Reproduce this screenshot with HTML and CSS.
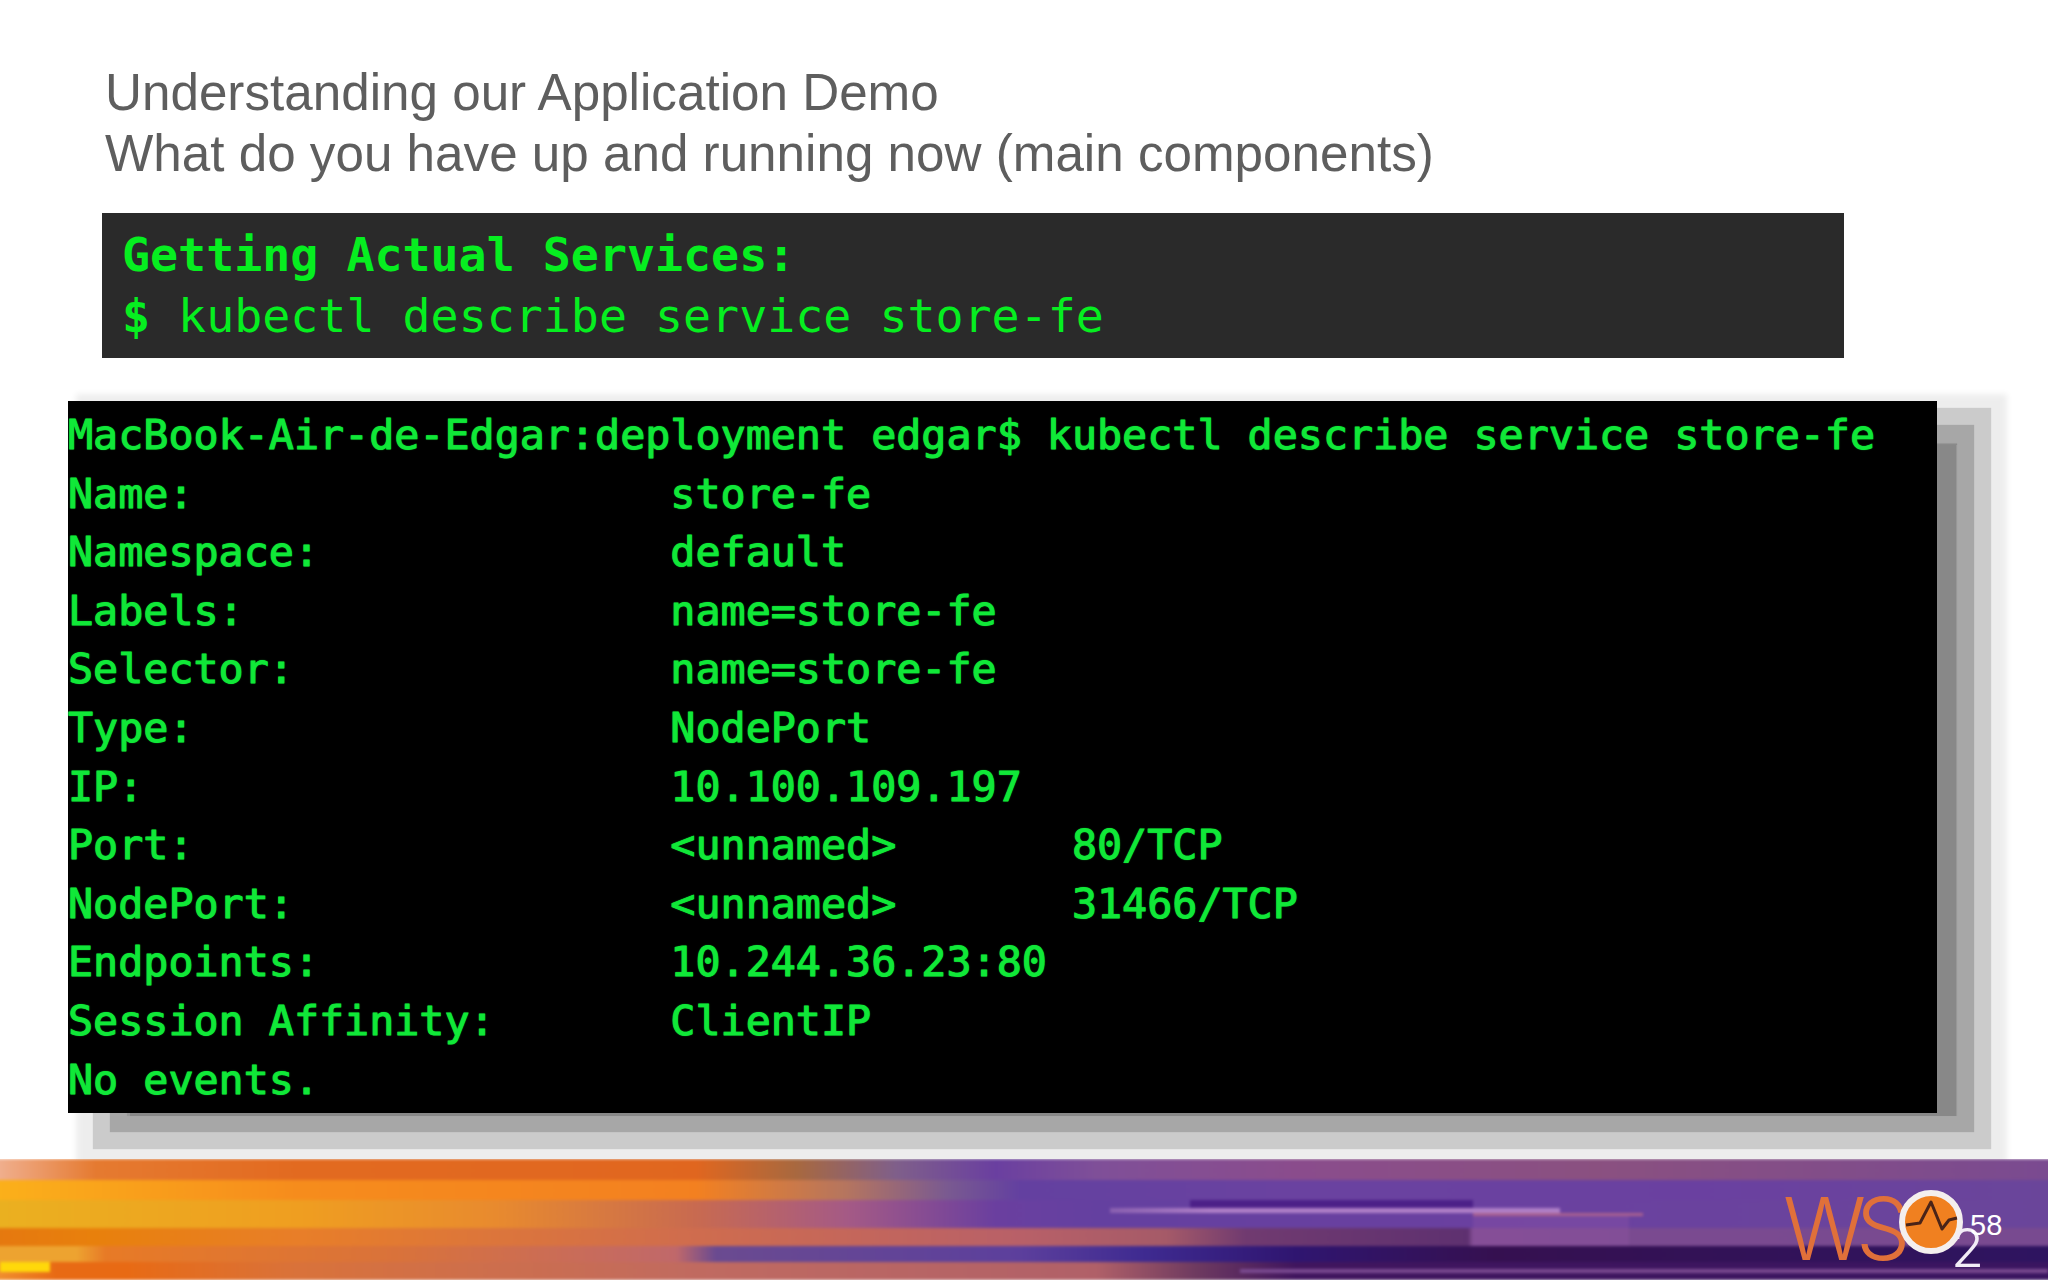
FILE: index.html
```html
<!DOCTYPE html>
<html lang="en">
<head>
    <meta charset="UTF-8">
    <title>Understanding our Application Demo</title>
    <link rel="stylesheet" href="styles.css">
</head>
<body>
    <div class="slide">
        <div class="title">
            <div>Understanding our Application Demo</div>
            <div>What do you have up and running now (main components)</div>
        </div>
        <div class="command">
            <div class="command-head">Getting Actual Services:</div>
            <div><b>$</b> kubectl describe service store-fe</div>
        </div>
        <pre class="terminal">MacBook-Air-de-Edgar:deployment edgar$ kubectl describe service store-fe
Name:                   store-fe
Namespace:              default
Labels:                 name=store-fe
Selector:               name=store-fe
Type:                   NodePort
IP:                     10.100.109.197
Port:                   &lt;unnamed&gt;       80/TCP
NodePort:               &lt;unnamed&gt;       31466/TCP
Endpoints:              10.244.36.23:80
Session Affinity:       ClientIP
No events.</pre>
        <div class="banner">
            <div class="strips">
                <div class="strip s1"></div>
                <div class="strip s2"></div>
                <div class="strip s3"></div>
                <div class="strip s4"></div>
                <div class="strip s5"></div>
                <div class="strip s6"></div>
                <div class="streak streak-yellow"></div>
                <div class="streak streak-dark"></div>
                <div class="streak streak-light"></div>
                <div class="streak streak-pink"></div>
                <div class="streak streak-low"></div>
                <div class="panel"></div>
            </div>
            <span class="logo-ws">WS</span>
            <svg class="logo-dot" width="70" height="70" viewBox="0 0 70 70">
                <circle cx="35" cy="35" r="29" fill="#f08020" stroke="#f4efee" stroke-width="6"/>
                <path d="M10 38 L24 36 L35 15 L46 42 L53 33 L61 31" fill="none" stroke="#4a2418" stroke-width="3" stroke-linejoin="round"/>
            </svg>
            <span class="logo-two">2</span>
            <span class="page-num">58</span>
        </div>
    </div>
</body>
</html>
```
FILE: styles.css
```css
body {
    margin: 0;
    background-color: #ffffff;
}
.slide {
    width: 2048px;
    height: 1280px;
    display: flex;
    flex-direction: column;
    overflow: hidden;
}
.title {
    margin: 62px 0 0 105px;
    font-family: "Liberation Sans", Arial, sans-serif;
    font-size: 51.2px;
    line-height: 61px;
    color: #5e5e5e;
}
.command {
    margin: 29px 0 0 102px;
    width: 1722px;
    height: 133px;
    padding: 12px 0 0 20px;
    background-color: #2a2a2a;
    font-family: "DejaVu Sans Mono", monospace;
    font-size: 46.6px;
    line-height: 61px;
    color: #06ee20;
}
.command-head, .command b {
    font-weight: bold;
}
.terminal {
    margin: 43px 0 0 68px;
    width: 1869px;
    height: 702px;
    padding: 5px 0;
    background-color: #000000;
    font-family: "DejaVu Sans Mono", monospace;
    font-size: 41.7px;
    line-height: 58.6px;
    color: #10e838;
    -webkit-text-stroke: 0.9px #10e838;
    text-shadow: 0 0 1.5px #10e838;
    box-shadow:
        39.5px 22px 1px -19.5px rgba(0, 0, 0, 0.18),
        39.5px 21.5px 1px -2.5px rgba(0, 0, 0, 0.175),
        39.5px 21.5px 1px 14.5px rgba(0, 0, 0, 0.14),
        39px 24px 6px 31px rgba(0, 0, 0, 0.07);
}
.banner {
    position: relative;
    margin-top: auto;
    height: 121px;
    overflow: hidden;
}
.strips {
    position: absolute;
    inset: 0;
    display: flex;
    flex-direction: column;
    filter: blur(1.5px);
}
.strip {
    margin: 0 -4px;
}
.s1 {
    height: 21px;
    background: linear-gradient(90deg, #f0b090 0, #e57a30 100px, #e26a20 300px, #e0661f 700px, #a8683f 800px, #7f5f8a 900px, #6a3fa0 1000px, #7f4f98 1100px, #8a4c8c 1300px, #8a5080 1600px, #7a4a90 2048px);
}
.s2 {
    height: 20px;
    background: linear-gradient(90deg, #fbb01a 0, #f68c1c 300px, #f38020 700px, #b5755f 850px, #7a5a90 950px, #6340a0 1024px, #6a42a0 1300px, #6a40a0 1700px, #6a459a 2048px);
}
.s3 {
    height: 28px;
    background: linear-gradient(90deg, #eab020 0, #ef9e20 300px, #e88a2e 500px, #c86a50 700px, #a55a85 850px, #6a3f9f 1000px, #6440a0 1100px, #6a40a0 1500px, #6a459a 2048px);
}
.s4 {
    height: 18px;
    background: linear-gradient(90deg, #e5780f 0, #e8800c 100px, #e87e28 300px, #cf6c4e 700px, #b86068 1024px, #a55a68 1170px, #703a70 1250px, #5e3070 1472px, #7f4a90 1476px, #7a4a90 1620px, #784a90 2048px);
}
.s5 {
    height: 16px;
    background: linear-gradient(90deg, #eda330 0, #eda330 80px, #e77a26 110px, #d9723a 400px, #c0686a 680px, #6a4a90 720px, #5c3f9c 1024px, #3e2a90 1150px, #2f1570 1300px, #351050 1500px, #2e1460 2048px);
}
.s6 {
    height: 18px;
    background: linear-gradient(90deg, #f09030 0, #e86a14 60px, #e86a14 130px, #d9723a 300px, #c06a60 700px, #b06068 1100px, #6e3a60 1200px, #40155e 1300px, #3a1560 2048px);
}
.streak {
    position: absolute;
}
.streak-yellow {
    left: 0;
    top: 103px;
    width: 50px;
    height: 10px;
    background-color: #ffd80a;
}
.streak-dark {
    left: 1190px;
    top: 41px;
    width: 283px;
    height: 8px;
    background-color: #4c2088;
}
.streak-light {
    left: 1110px;
    top: 49px;
    width: 450px;
    height: 5px;
    background: linear-gradient(90deg, #8a60b0, #b080c8 100px);
}
.streak-pink {
    left: 1473px;
    top: 54px;
    width: 170px;
    height: 3px;
    background-color: #a86090;
}
.streak-low {
    left: 1240px;
    top: 110px;
    width: 808px;
    height: 4px;
    background-color: #7a4a90;
}
.panel {
    position: absolute;
    left: 1473px;
    top: 57px;
    width: 156px;
    height: 30px;
    background-color: rgba(150, 90, 170, 0.3);
}
.logo-ws {
    position: absolute;
    left: 1783px;
    top: 22px;
    font-family: Inter, sans-serif;
    font-weight: 300;
    font-size: 86px;
    line-height: 96px;
    letter-spacing: -10px;
    color: #e0703a;
    filter: blur(0.7px);
}
.logo-dot {
    position: absolute;
    left: 1896px;
    top: 28px;
    filter: blur(0.5px);
}
.logo-two {
    position: absolute;
    left: 1951px;
    top: 59px;
    font-family: Inter, sans-serif;
    font-weight: 300;
    font-size: 54px;
    line-height: 60px;
    color: #f2ecf6;
    filter: blur(0.5px);
}
.page-num {
    position: absolute;
    left: 1970px;
    top: 49px;
    font-family: "Liberation Sans", Arial, sans-serif;
    font-size: 29px;
    line-height: 34px;
    color: #ffffff;
}
```
